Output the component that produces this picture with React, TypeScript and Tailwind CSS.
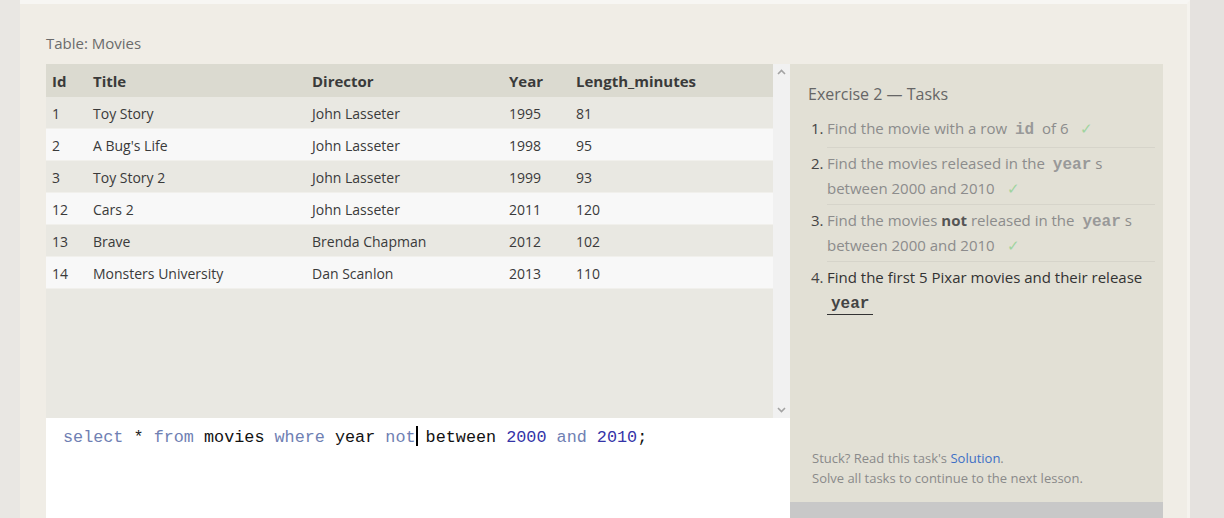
import React from "react";

const rows = [
  ["1", "Toy Story", "John Lasseter", "1995", "81"],
  ["2", "A Bug's Life", "John Lasseter", "1998", "95"],
  ["3", "Toy Story 2", "John Lasseter", "1999", "93"],
  ["12", "Cars 2", "John Lasseter", "2011", "120"],
  ["13", "Brave", "Brenda Chapman", "2012", "102"],
  ["14", "Monsters University", "Dan Scanlon", "2013", "110"],
];

const cols = "grid grid-cols-[41px_219px_197px_67px_1fr]";
const mono = { fontFamily: '"Liberation Mono", "Courier New", monospace' };

function Code({ children, dark }: { children: React.ReactNode; dark?: boolean }) {
  return (
    <code
      style={mono}
      className={
        "font-bold text-[16px] leading-[16px] px-[4px] " +
        (dark ? "text-[#444] border-b-[1.5px] border-[#333] pb-[1px]" : "text-[#999]")
      }
    >
      {children}
    </code>
  );
}

function Check() {
  return <span className="ml-[8px] leading-[15px] text-[#9fd49f]">✓</span>;
}

function Task({
  n,
  children,
  done,
  last,
  pad,
}: {
  n: string;
  children: React.ReactNode;
  done?: boolean;
  last?: boolean;
  pad: string;
}) {
  return (
    <div className="flex">
      <div className="w-[16px] shrink-0 -ml-[16px] pt-[3px] text-[#444] leading-[25px]">{n}</div>
      <div
        className={
          "flex-1 leading-[25px] " +
          pad +
          " " +
          (last ? "" : "border-b border-[#d6d4ca] ") +
          (done ? "text-[#8c8c8c]" : "text-[#333]")
        }
      >
        {children}
      </div>
    </div>
  );
}

export default function App() {
  return (
    <div
      className="flex w-[1224px] h-[518px] overflow-hidden bg-[#e7e4e1]"
      style={{ fontFamily: '"Open Sans", "Noto Sans", sans-serif' }}
    >
      <div className="w-[20px] shrink-0 bg-[#e9e7e3]" />
      <div className="w-[1170px] shrink-0 bg-[#f0ede6] border-t-[4px] border-[#f7f6f3] border-r-[3px] border-r-[#f5f3ee] flex flex-col">
        <div className="pl-[26px] pt-[29px] text-[15px] leading-[20px] text-[#6b6b6b]">Table: Movies</div>
        <div className="flex pl-[26px] mt-[11px]">
          {/* left column */}
          <div className="w-[744px] shrink-0 flex flex-col">
            <div className="flex h-[354px]">
              <div className="w-[727px] bg-[#e9e8e2] text-[#3a3a3a]">
                <div className={cols + " h-[33px] items-center bg-[#dbdad0] text-[15px] font-bold text-[#3a3a3a]"}>
                  {["Id", "Title", "Director", "Year", "Length_minutes"].map((h) => (
                    <div key={h} className="px-[6px] pt-[1px]">{h}</div>
                  ))}
                </div>
                {rows.map((r, i) => (
                  <div
                    key={i}
                    className={
                      cols +
                      " h-[32px] items-center text-[14px] border-b border-[#f1f0ec] " +
                      (i % 2 === 0 ? "bg-[#e9e8e2]" : "bg-[#f8f8f8]")
                    }
                  >
                    {r.map((c, j) => (
                      <div key={j} className="px-[6px] pt-[1px]">{c}</div>
                    ))}
                  </div>
                ))}
              </div>
              <div className="w-[17px] bg-[#f1f1f1] flex flex-col justify-between items-center py-[5px]">
                <svg width="9" height="6" viewBox="0 0 9 6"><path d="M1 5 L4.5 1.5 L8 5" fill="none" stroke="#a3a3a3" strokeWidth="1.6" /></svg>
                <svg width="9" height="6" viewBox="0 0 9 6"><path d="M1 1 L4.5 4.5 L8 1" fill="none" stroke="#a3a3a3" strokeWidth="1.6" /></svg>
              </div>
            </div>
            <div className="bg-white h-[120px] pl-[17px] pt-[8px] text-[16.8px] leading-[24px] whitespace-pre" style={mono}>
              <span className="text-[#6f80b3]">select</span>
              <span className="text-[#222]"> * </span>
              <span className="text-[#6f80b3]">from</span>
              <span className="text-[#111]"> movies </span>
              <span className="text-[#6f80b3]">where</span>
              <span className="text-[#111]"> year </span>
              <span className="text-[#6f80b3]">not</span>
              <span className="inline-block w-[2px] h-[20px] -mr-[2px] bg-black align-[-4px]" />
              <span className="text-[#111]"> between </span>
              <span className="text-[#3434a8]">2000</span>
              <span className="text-[#6f80b3]"> and </span>
              <span className="text-[#3434a8]">2010</span>
              <span className="text-[#111]">;</span>
            </div>
          </div>
          {/* right panel */}
          <div className="w-[373px] shrink-0 flex flex-col">
            <div className="h-[438px] bg-[#e2e0d5] flex flex-col">
              <div className="pl-[18px] pt-[18px] text-[16px] leading-[24px] text-[#666]">Exercise 2 — Tasks</div>
              <div className="pl-[37px] pr-[8px] mt-[7px] text-[15px]">
                <Task n="1." done pad="pt-[3px] pb-[6px]">
                  Find the movie with a row <Code>id</Code> of 6 <Check />
                </Task>
                <Task n="2." done pad="py-[3px]">
                  Find the movies released in the <Code>year</Code>s between 2000 and 2010 <Check />
                </Task>
                <Task n="3." done pad="py-[3px]">
                  Find the movies <b className="text-[#555]">not</b> released in the <Code>year</Code>s between 2000 and 2010 <Check />
                </Task>
                <Task n="4." last pad="py-[3px]">
                  Find the first 5 Pixar movies and their release <Code dark>year</Code>
                </Task>
              </div>
              <div className="mt-auto pl-[22px] pb-[14px] text-[13px] leading-[20px] text-[#8a8a8a]">
                <div>
                  Stuck? Read this task's <span className="text-[#3d6fc5]">Solution</span>.
                </div>
                <div>Solve all tasks to continue to the next lesson.</div>
              </div>
            </div>
            <div className="h-[20px] bg-[#c8c8c8]" />
          </div>
        </div>
      </div>
      <div className="flex-1 bg-[#e5e2df]" />
    </div>
  );
}
